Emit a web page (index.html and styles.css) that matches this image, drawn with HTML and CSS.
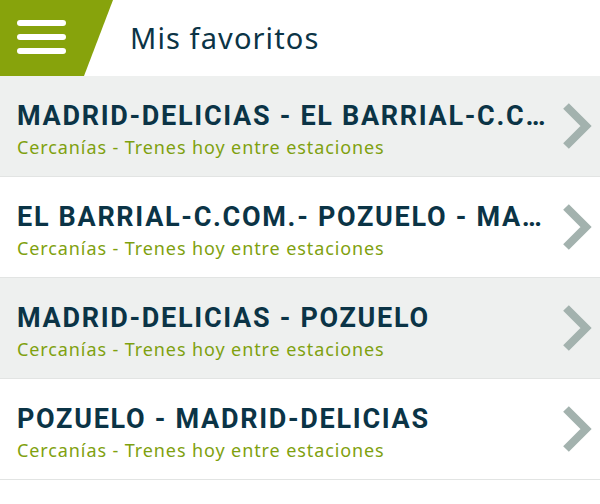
FILE: index.html
```html
<!DOCTYPE html>
<html lang="es">

<head>
    <meta charset="UTF-8">
    <meta name="viewport" content="width=device-width, initial-scale=1.0">
    <title>Mis favoritos</title>
    <link rel="stylesheet" href="styles.css">
</head>

<body>
    <!-- Cabecera con menú -->
    <header class="cabecera">
        <div class="menu">
            <span class="barra"></span>
            <span class="barra"></span>
            <span class="barra"></span>
        </div>
        <h1 class="titulo">Mis favoritos</h1>
    </header>

    <!-- Lista de trayectos favoritos -->
    <ul class="favoritos">
        <li class="favorito">
            <div class="texto">
                <div class="trayecto">MADRID-DELICIAS - EL BARRIAL-C.COM.- POZUELO</div>
                <div class="servicio">Cercanías - Trenes hoy entre estaciones</div>
            </div>
            <svg class="flecha" viewBox="0 0 32 48"><polyline points="4,4 24,24 4,44"/></svg>
        </li>
        <li class="favorito">
            <div class="texto">
                <div class="trayecto">EL BARRIAL-C.COM.- POZUELO - MADRID-DELICIAS</div>
                <div class="servicio">Cercanías - Trenes hoy entre estaciones</div>
            </div>
            <svg class="flecha" viewBox="0 0 32 48"><polyline points="4,4 24,24 4,44"/></svg>
        </li>
        <li class="favorito">
            <div class="texto">
                <div class="trayecto">MADRID-DELICIAS - POZUELO</div>
                <div class="servicio">Cercanías - Trenes hoy entre estaciones</div>
            </div>
            <svg class="flecha" viewBox="0 0 32 48"><polyline points="4,4 24,24 4,44"/></svg>
        </li>
        <li class="favorito">
            <div class="texto">
                <div class="trayecto">POZUELO - MADRID-DELICIAS</div>
                <div class="servicio">Cercanías - Trenes hoy entre estaciones</div>
            </div>
            <svg class="flecha" viewBox="0 0 32 48"><polyline points="4,4 24,24 4,44"/></svg>
        </li>
    </ul>
</body>

</html>
```

FILE: styles.css
```css
body {
    margin: 0;
    background-color: #fff;
    font-family: "Noto Sans", sans-serif;
}

.cabecera {
    display: flex;
    align-items: center;
    height: 76px;
    background-color: #fff;
}

.menu {
    width: 113px;
    height: 76px;
    background-color: #87a30c;
    clip-path: polygon(0 0, 113px 0, 84px 76px, 0 76px);
    display: flex;
    flex-direction: column;
    gap: 8px;
    padding: 20px 0 0 17px;
    box-sizing: border-box;
}

.barra {
    display: block;
    width: 49px;
    height: 6px;
    border-radius: 3px;
    background-color: #fff;
}

.titulo {
    margin: 0 0 0 17px;
    font-size: 29px;
    font-weight: normal;
    letter-spacing: 1.1px;
    color: #0b3446;
    line-height: 40px;
}

.favoritos {
    list-style-type: none;
    margin: 0;
    padding: 0;
}

.favorito {
    display: flex;
    align-items: center;
    height: 100px;
    padding: 0 6px 0 17px;
    border-bottom: 1px solid #e2e4e3;
}

.favorito:nth-child(odd) {
    background-color: #eef0ef;
}

.texto {
    flex: 1;
    min-width: 0;
    padding-top: 8px;
}

.trayecto {
    font-family: Roboto, sans-serif;
    font-weight: bold;
    font-size: 27px;
    letter-spacing: 1.7px;
    line-height: 30px;
    color: #0b3446;
    white-space: nowrap;
    overflow: hidden;
    text-overflow: ellipsis;
}

.servicio {
    margin-top: 4px;
    font-size: 18px;
    letter-spacing: 0.9px;
    line-height: 24px;
    color: #7fa10f;
}

.flecha {
    width: 32px;
    height: 48px;
    margin-left: 6px;
    flex-shrink: 0;
}

.flecha polyline {
    fill: none;
    stroke: #a3b2ae;
    stroke-width: 8;
}
```
